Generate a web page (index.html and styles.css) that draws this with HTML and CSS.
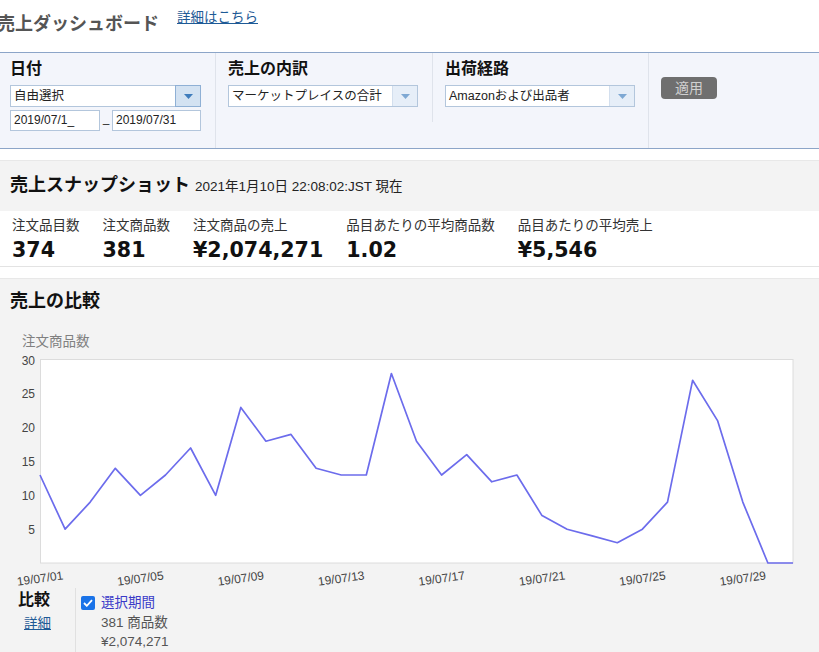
FILE: index.html
```html
<!DOCTYPE html>
<html lang="ja">
<head>
<meta charset="utf-8">
<title>売上ダッシュボード</title>
<link rel="stylesheet" href="styles.css">
</head>
<body>
<header class="topbar">
  <h1 class="title">売上ダッシュボード</h1>
  <a class="more-link" href="#">詳細はこちら</a>
</header>

<section class="filters">
  <div class="filter-col first">
    <div class="filter-label">日付</div>
    <div class="select select-active">
      <span class="select-text">自由選択</span>
      <span class="select-btn"><svg width="9" height="5" viewBox="0 0 9 5"><polygon points="0,0 9,0 4.5,5" fill="#3f7cbc"/></svg></span>
    </div>
    <div class="date-row">
      <div class="date-input date-from">2019/07/1_</div>
      <span class="dash">–</span>
      <div class="date-input date-to">2019/07/31</div>
    </div>
  </div>
  <div class="filter-col short">
    <div class="filter-label">売上の内訳</div>
    <div class="select">
      <span class="select-text">マーケットプレイスの合計</span>
      <span class="select-btn"><svg width="9" height="5" viewBox="0 0 9 5"><polygon points="0,0 9,0 4.5,5" fill="#7ea8d3"/></svg></span>
    </div>
  </div>
  <div class="filter-col">
    <div class="filter-label">出荷経路</div>
    <div class="select">
      <span class="select-text">Amazonおよび出品者</span>
      <span class="select-btn"><svg width="9" height="5" viewBox="0 0 9 5"><polygon points="0,0 9,0 4.5,5" fill="#7ea8d3"/></svg></span>
    </div>
  </div>
  <div class="filter-col apply">
    <button class="apply-btn" type="button">適用</button>
  </div>
</section>

<section class="snapshot">
  <div class="snapshot-head">
    <span class="snap-title">売上スナップショット</span><span class="snap-time">2021年1月10日 22:08:02:JST 現在</span>
  </div>
  <div class="metrics">
    <div class="metric">
      <div class="metric-label">注文品目数</div>
      <div class="metric-value">374</div>
    </div>
    <div class="metric">
      <div class="metric-label">注文商品数</div>
      <div class="metric-value">381</div>
    </div>
    <div class="metric">
      <div class="metric-label">注文商品の売上</div>
      <div class="metric-value">¥2,074,271</div>
    </div>
    <div class="metric">
      <div class="metric-label">品目あたりの平均商品数</div>
      <div class="metric-value">1.02</div>
    </div>
    <div class="metric">
      <div class="metric-label">品目あたりの平均売上</div>
      <div class="metric-value">¥5,546</div>
    </div>
  </div>
</section>

<section class="compare">
  <h2 class="compare-title">売上の比較</h2>
  <div class="axis-title">注文商品数</div>
  <svg class="chart" width="819" height="237" viewBox="0 0 819 237">
    <rect x="40.5" y="8.5" width="752.5" height="203.5" fill="#ffffff" stroke="#dcdcdc" stroke-width="1"/>
    <g class="ylab" font-size="12" fill="#444" text-anchor="end">
      <text x="35" y="13.5">30</text>
      <text x="35" y="47.3">25</text>
      <text x="35" y="81.1">20</text>
      <text x="35" y="115">15</text>
      <text x="35" y="148.8">10</text>
      <text x="35" y="182.6">5</text>
    </g>
    <polyline fill="none" stroke="#6c6cec" stroke-width="1.7" stroke-linejoin="round"
      points="40,124 65.1,178.2 90.2,151.1 115.3,117.3 140.4,144.3 165.5,124 190.6,97 215.7,144.3 240.8,56.4 265.9,90.2 291,83.4 316.1,117.3 341.2,124 366.3,124 391.4,22.5 416.5,90.2 441.6,124 466.7,103.7 491.8,130.8 516.9,124 542,164.6 567.1,178.2 592.2,184.9 617.3,191.7 642.4,178.2 667.5,151.1 692.6,29.3 717.7,69.9 742.8,151.1 767.9,212 793,212"/>
    <g class="xlab" font-size="12" fill="#444" text-anchor="middle">
      <text x="40" y="231.5" transform="rotate(-8 40 227.5)">19/07/01</text>
      <text x="140.4" y="231.5" transform="rotate(-8 140.4 227.5)">19/07/05</text>
      <text x="240.8" y="231.5" transform="rotate(-8 240.8 227.5)">19/07/09</text>
      <text x="341.2" y="231.5" transform="rotate(-8 341.2 227.5)">19/07/13</text>
      <text x="441.6" y="231.5" transform="rotate(-8 441.6 227.5)">19/07/17</text>
      <text x="542" y="231.5" transform="rotate(-8 542 227.5)">19/07/21</text>
      <text x="642.4" y="231.5" transform="rotate(-8 642.4 227.5)">19/07/25</text>
      <text x="742.8" y="231.5" transform="rotate(-8 742.8 227.5)">19/07/29</text>
    </g>
  </svg>
  <div class="compare-row">
    <div class="compare-side">
      <div class="side-title">比較</div>
      <a class="side-link" href="#">詳細</a>
    </div>
    <div class="compare-body">
      <div class="period-row">
        <span class="check"><svg width="10" height="8" viewBox="0 0 10 8"><polyline points="1,4 3.8,6.8 9,1.2" fill="none" stroke="#fff" stroke-width="1.8"/></svg></span>
        <span class="period-name">選択期間</span>
      </div>
      <div class="period-line">381 商品数</div>
      <div class="period-line">¥2,074,271</div>
    </div>
  </div>
</section>
</body>
</html>
```
FILE: styles.css
```css
* { box-sizing: border-box; }
html, body { margin: 0; padding: 0; }
body {
  width: 819px;
  height: 652px;
  overflow: hidden;
  background: #ffffff;
  font-family: "Liberation Sans", "Noto Sans CJK JP", sans-serif;
  font-size: 13.5px;
  color: #222;
}

/* top bar */
.topbar {
  height: 52px;
  display: flex;
  align-items: flex-start;
}
.title {
  margin: 12px 0 0 -3px;
  font-size: 18px;
  line-height: 24px;
  font-weight: bold;
  color: #555;
}
.more-link {
  margin: 9px 0 0 18px;
  font-size: 13.5px;
  line-height: 18px;
  color: #1e5a96;
  text-decoration: underline;
}

/* filters */
.filters {
  display: grid;
  grid-template-columns: 216px 217px 216px 1fr;
  height: 97px;
  border-top: 1px solid #8ca5c8;
  border-bottom: 1px solid #8ca5c8;
  background: #f3f5fb;
}
.filter-col {
  padding: 6px 0 0 12px;
  border-right: 1px solid #dfe3eb;
}
.filter-col.first { padding-left: 10px; }
.filter-col.short { align-self: start; height: 69px; }
.filter-col.apply { border-right: none; padding-top: 24px; padding-left: 12px; }
.filter-label {
  font-size: 16px;
  font-weight: bold;
  line-height: 20px;
  color: #111;
  margin-bottom: 6px;
}
.select {
  display: flex;
  width: 190px;
  height: 22px;
  background: #fff;
  border: 1px solid #b3c6dc;
}
.select-active { width: 191px; }
.select-text {
  flex: 1;
  padding-left: 3px;
  font-size: 12.5px;
  line-height: 20px;
  color: #222;
  white-space: nowrap;
  overflow: hidden;
}
.select-btn {
  width: 25px;
  display: flex;
  align-items: center;
  justify-content: center;
  background: #e6eef8;
  border-left: 1px solid #d3dfee;
}
.select-active .select-btn {
  width: 26px;
  margin: -1px -1px -1px 0;
  background: #d3e2f2;
  border: 1px solid #8fb0d5;
}
.date-row {
  display: flex;
  align-items: flex-start;
  margin-top: 3px;
}
.date-input {
  height: 21px;
  border: 1px solid #b3c6dc;
  background: #fff;
  font-size: 12px;
  line-height: 19px;
  padding-left: 3px;
  color: #222;
}
.date-from { width: 90px; }
.date-to { width: 89px; }
.dash {
  width: 12px;
  text-align: center;
  font-size: 12px;
  line-height: 12px;
  padding-top: 8px;
  color: #333;
}
.apply-btn {
  width: 56px;
  height: 22px;
  padding: 0;
  border: none;
  border-radius: 4px;
  background: #6f6f6f;
  color: #d0d0d0;
  font-family: "Liberation Sans", "Noto Sans CJK JP", sans-serif;
  font-size: 14px;
  line-height: 22px;
}

/* snapshot */
.snapshot { margin-top: 11px; }
.snapshot-head {
  height: 51px;
  padding: 12px 10px 0;
  background: #f3f3f3;
  border-top: 1px solid #e8e8e8;
  line-height: 24px;
}
.snap-title {
  font-size: 18px;
  font-weight: bold;
  color: #111;
}
.snap-time {
  margin-left: 5px;
  font-size: 13.5px;
  color: #222;
}
.metrics {
  display: flex;
  gap: 23px;
  padding: 6px 12px 4px;
  border-bottom: 1px solid #e3e3e3;
}
.metric-label {
  font-size: 13.5px;
  line-height: 18px;
  color: #333;
}
.metric-value {
  margin-top: 3px;
  font-family: "DejaVu Sans", "Noto Sans CJK JP", sans-serif;
  font-weight: bold;
  font-size: 20.6px;
  line-height: 24px;
  color: #111;
}

/* comparison */
.compare {
  margin-top: 11px;
  padding-top: 10px;
  height: 400px;
  background: #f3f3f3;
  border-top: 1px solid #e8e8e8;
}
.compare-title {
  margin: 0 0 0 10px;
  font-size: 18px;
  line-height: 24px;
  font-weight: bold;
  color: #111;
}
.axis-title {
  margin: 20px 0 0 22px;
  font-size: 13.5px;
  line-height: 18px;
  color: #808080;
}
.chart {
  display: block;
  font-family: "Liberation Sans", sans-serif;
}
.compare-row { display: flex; }
.compare-side {
  width: 76px;
  height: 70px;
  padding-top: 1px;
  border-right: 1px solid #e0e0e0;
}
.side-title {
  padding-left: 18px;
  font-size: 16px;
  font-weight: bold;
  line-height: 22px;
  color: #111;
}
.side-link {
  display: inline-block;
  margin: 3px 0 0 24px;
  font-size: 13.5px;
  line-height: 20px;
  color: #1e5a96;
  text-decoration: underline;
}
.compare-body { padding: 5px 0 0 5px; }
.period-row {
  display: flex;
  align-items: center;
  gap: 6px;
  line-height: 20px;
}
.check {
  width: 14px;
  height: 14px;
  border-radius: 2px;
  background: #1a73e8;
  display: flex;
  align-items: center;
  justify-content: center;
}
.period-name { color: #3a3ac8; }
.period-line {
  padding-left: 20px;
  line-height: 19px;
  color: #555;
}
```
